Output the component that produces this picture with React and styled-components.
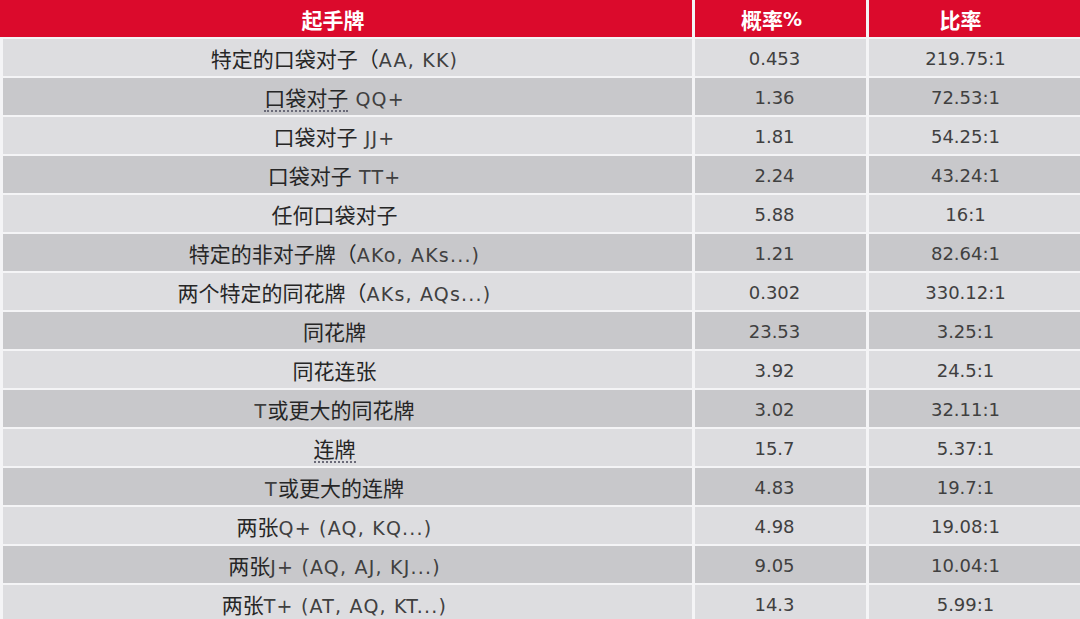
import React from "react";
import styled, { createGlobalStyle } from "styled-components";

const Global = createGlobalStyle`
  html, body { margin: 0; padding: 0; background: #ffffff; overflow: hidden; }
  body { width: 1080px; height: 619px; }
`;

const Table = styled.div`
  display: grid;
  grid-template-columns: 689px 171px 1fr;
  grid-auto-rows: 37px;
  column-gap: 3px;
  row-gap: 2px;
  padding-left: 3px;
  width: 1080px;
  box-sizing: border-box;
  background: #f4f4f6;
  font-family: "DejaVu Sans", "Noto Sans CJK SC", sans-serif;
`;

const HeadCell = styled.div`
  background: #db0a2c;
  color: #ffffff;
  font-weight: bold;
  font-size: 19px;
  display: flex;
  align-items: center;
  justify-content: center;
  padding-right: ${(p) => p.$shift}px;
  margin-left: ${(p) => (p.$first ? "-3px" : "0")};
`;

const Cell = styled.div`
  background: ${(p) => (p.$dark ? "#c8c8cb" : "#dddde0")};
  color: #404040;
  font-size: 18px;
  display: flex;
  align-items: center;
  justify-content: center;
  padding-right: ${(p) => p.$shift}px;
  padding-top: 2px;
  box-sizing: border-box;
  white-space: pre;
`;

const LabelText = styled.span`
  font-size: 19px;
  letter-spacing: 1.2px;
  line-height: 1.3;
`;

const Han = styled.span`
  font-family: "Noto Sans CJK SC", sans-serif;
  font-size: 21px;
  letter-spacing: 0;
  color: ${(p) => (p.$head ? "#ffffff" : "#262626")};
`;

const Squiggle = styled.span`
  border-bottom: 2px dotted #6a6a78;
`;

const CJK = /([\u3000-\u9fff\uff00-\uffef]+)/;

const split = (text, head) =>
  text
    .split(CJK)
    .filter(Boolean)
    .map((s, i) =>
      /[\u3000-\u9fff\uff00-\uffef]/.test(s) ? (
        <Han key={i} $head={head}>{s}</Han>
      ) : (
        <React.Fragment key={i}>{s}</React.Fragment>
      )
    );

const Label = ({ text, sq = 0 }) => (
  <LabelText>
    {sq ? (
      <>
        <Squiggle>{split(text.slice(0, sq))}</Squiggle>
        {split(text.slice(sq))}
      </>
    ) : (
      split(text)
    )}
  </LabelText>
);

const rows = [
  ["特定的口袋对子（AA, KK)", 0, "0.453", "219.75:1"],
  ["口袋对子 QQ+", 4, "1.36", "72.53:1"],
  ["口袋对子 JJ+", 0, "1.81", "54.25:1"],
  ["口袋对子 TT+", 0, "2.24", "43.24:1"],
  ["任何口袋对子", 0, "5.88", "16:1"],
  ["特定的非对子牌（AKo, AKs...)", 0, "1.21", "82.64:1"],
  ["两个特定的同花牌（AKs, AQs...)", 0, "0.302", "330.12:1"],
  ["同花牌", 0, "23.53", "3.25:1"],
  ["同花连张", 0, "3.92", "24.5:1"],
  ["T或更大的同花牌", 0, "3.02", "32.11:1"],
  ["连牌", 2, "15.7", "5.37:1"],
  ["T或更大的连牌", 0, "4.83", "19.7:1"],
  ["两张Q+ (AQ, KQ...)", 0, "4.98", "19.08:1"],
  ["两张J+ (AQ, AJ, KJ...)", 0, "9.05", "10.04:1"],
  ["两张T+ (AT, AQ, KT...)", 0, "14.3", "5.99:1"],
];

export default function App() {
  return (
    <>
      <Global />
      <Table>
        <HeadCell $first $shift={26}>{split("起手牌", true)}</HeadCell>
        <HeadCell $shift={18}>{split("概率%", true)}</HeadCell>
        <HeadCell $shift={28}>{split("比率", true)}</HeadCell>
        {rows.map((r, i) => (
          <React.Fragment key={i}>
            <Cell $dark={i % 2 === 1} $shift={26}>
              <Label text={r[0]} sq={r[1]} />
            </Cell>
            <Cell $dark={i % 2 === 1} $shift={12}>{r[2]}</Cell>
            <Cell $dark={i % 2 === 1} $shift={18}>{r[3]}</Cell>
          </React.Fragment>
        ))}
      </Table>
    </>
  );
}
